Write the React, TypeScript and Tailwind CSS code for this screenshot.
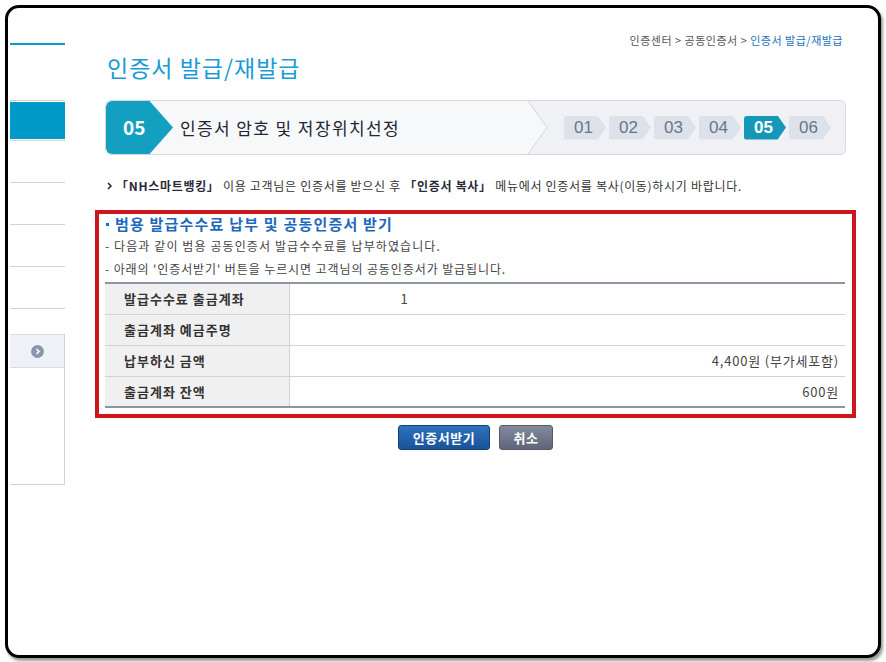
import React from "react";

const font = { fontFamily: '"Noto Sans CJK KR", "Noto Sans", sans-serif' };

function Sidebar() {
  return (
    <div className="ml-[2px] w-[55px] shrink-0 flex flex-col">
      <div className="mt-[35px] h-[2px] bg-[#0a9bcb]" />
      <div className="mt-[55px] h-px bg-[#cfd3da]" />
      <div className="mt-px h-[37px] bg-[#009ac9]" />
      <div className="mt-px h-px bg-[#cfd3da]" />
      <div className="mt-[41px] h-px bg-[#cfd3da]" />
      <div className="mt-[41px] h-px bg-[#cfd3da]" />
      <div className="mt-[41px] h-px bg-[#cfd3da]" />
      <div className="mt-[41px] h-px bg-[#cfd3da]" />
      <div className="mt-[25px] border-r border-b border-[#cfd3da]">
        <div className="h-[34px] bg-[#eef1f6] border-t border-b border-[#d7dbe2] flex items-center justify-end pr-[20px]">
          <span className="w-[13px] h-[13px] rounded-full bg-[#8b95ae] flex items-center justify-center">
            <svg width="7" height="7" viewBox="0 0 7 7">
              <path d="M2.5 1 L5 3.5 L2.5 6" stroke="#fff" strokeWidth="1.6" fill="none" />
            </svg>
          </span>
        </div>
        <div className="h-[116px]" />
      </div>
    </div>
  );
}

function StepPill({ n, active }: { n: string; active?: boolean }) {
  return (
    <div
      className={`w-[42px] h-[24px] rounded-l-[3px] flex items-center pl-[10px] text-[17px] [clip-path:polygon(0_0,80%_0,100%_50%,80%_100%,0_100%)] ${
        active ? "bg-[#1597b9] text-white font-bold" : "bg-[#dde2ea] text-[#66768c]"
      }`}
      style={{ fontFamily: '"Liberation Sans", Arial, sans-serif' }}
    >
      {n}
    </div>
  );
}

function StepBar() {
  return (
    <div className="mx-[10px] mt-[17px] h-[55px] flex rounded-[6px] border border-[#d5d9df] bg-[#eff1f4] overflow-hidden">
      <div className="flex items-center flex-1 bg-[#f7f8fa]">
        <div className="w-[67px] h-full bg-[#139fbf] rounded-l-[6px] flex items-center pl-[17px] text-white text-[19px] font-bold [clip-path:polygon(0_0,65%_0,100%_50%,65%_100%,0_100%)]">
          05
        </div>
        <div className="ml-[7px] text-[17px] tracking-[1.4px] text-[#1f2433]">인증서 암호 및 저장위치선정</div>
      </div>
      <svg width="24" height="53" viewBox="0 0 24 53" className="shrink-0">
        <polygon points="0,0 3,0 22,26.5 3,53 0,53" fill="#f7f8fa" />
        <polyline points="3,0 22,26.5 3,53" fill="none" stroke="#d3d7dd" strokeWidth="1" />
      </svg>
      <div className="flex items-center gap-[3px] pl-[15px] pr-[14px]">
        <StepPill n="01" />
        <StepPill n="02" />
        <StepPill n="03" />
        <StepPill n="04" />
        <StepPill n="05" active />
        <StepPill n="06" />
      </div>
    </div>
  );
}

const rows = [
  { label: "발급수수료 출금계좌", value: "1", align: "left" },
  { label: "출금계좌 예금주명", value: "", align: "right" },
  { label: "납부하신 금액", value: "4,400원 (부가세포함)", align: "right" },
  { label: "출금계좌 잔액", value: "600원", align: "right" },
];

function FeeBox() {
  return (
    <div className="mt-[16px] border-[4px] border-[#cc161c] pl-[6px] pr-[7px] pb-[6px]">
      <div className="h-[20px] flex items-center text-[15px] tracking-[1.2px] font-bold text-[#1f69bd]">
        <span className="w-[3px] h-[3px] bg-[#1f69bd] mr-[6px] ml-[1px]" />
        범용 발급수수료 납부 및 공동인증서 받기
      </div>
      <div className="text-[12px] leading-[23px] tracking-[1.1px] text-[#444]">- 다음과 같이 범용 공동인증서 발급수수료를 납부하였습니다.</div>
      <div className="text-[12px] leading-[23px] tracking-[0.9px] text-[#444]">- 아래의 '인증서받기' 버튼을 누르시면 고객님의 공동인증서가 발급됩니다.</div>
      <table className="mt-[2px] w-full border-collapse border-t-2 border-b-2 border-[#8c95a3]">
        <tbody>
          {rows.map((r, i) => (
            <tr key={i} className={i < rows.length - 1 ? "border-b border-[#cfd3d9]" : ""}>
              <td className="w-[184px] h-[31px] bg-[#f0f0f0] border-r border-[#cfd3d9] pl-[19px] text-[13px] tracking-[1px] font-bold text-[#333]">
                {r.label}
              </td>
              <td
                className={`h-[31px] text-[13px] tracking-[0.8px] text-[#444] ${
                  r.align === "left" ? "pl-[111px] text-left" : "pr-[6px] text-right"
                }`}
              >
                {r.value}
              </td>
            </tr>
          ))}
        </tbody>
      </table>
    </div>
  );
}

export default function App() {
  return (
    <div className="w-[886px] h-[662px] bg-white pt-[5px] pl-[5px] pr-[5px] pb-[4px]" style={font}>
      <div className="h-full border-[3px] border-black rounded-[14px] shadow-[2px_3px_3px_rgba(0,0,0,0.4)] flex overflow-hidden bg-white">
        <Sidebar />
        <div className="ml-[30px] w-[761px] flex flex-col">
          <div className="mt-[24px] pr-[13px] text-right text-[11px] leading-[16px] tracking-[0.5px] text-[#555]">
            인증센터 &gt; 공동인증서 &gt; <span className="text-[#1a70c2]">인증서 발급/재발급</span>
          </div>
          <h1 className="mt-[3px] pl-[12px] text-[23px] leading-[32px] tracking-[1px] text-[#1a9bd6]">인증서 발급/재발급</h1>
          <StepBar />
          <div className="mt-[23px] pl-[12px] flex items-center text-[12px] leading-[16px] tracking-[0.7px] text-[#333]">
            <svg width="5" height="8" viewBox="0 0 5 8" className="mr-[4px]">
              <path d="M1 1 L4 4 L1 7" stroke="#222" strokeWidth="1.5" fill="none" />
            </svg>
            <b className="text-[#2a2a3a]">「NH스마트뱅킹」</b>
            <span>&nbsp;이용 고객님은 인증서를 받으신 후&nbsp;</span>
            <b className="text-[#2a2a3a]">「인증서 복사」</b>
            <span>&nbsp;메뉴에서 인증서를 복사(이동)하시기 바랍니다.</span>
          </div>
          <FeeBox />
          <div className="mt-[7px] flex justify-center gap-[9px]">
            <button className="w-[92px] h-[25px] rounded-[3px] border border-[#163f78] bg-gradient-to-b from-[#2d73bd] to-[#1b5298] text-white text-[13px] tracking-[0.5px] font-bold">
              인증서받기
            </button>
            <button className="w-[54px] h-[25px] rounded-[3px] border border-[#555b6b] bg-gradient-to-b from-[#838a9c] to-[#5f6679] text-white text-[13px] tracking-[0.5px] font-bold">
              취소
            </button>
          </div>
        </div>
      </div>
    </div>
  );
}
